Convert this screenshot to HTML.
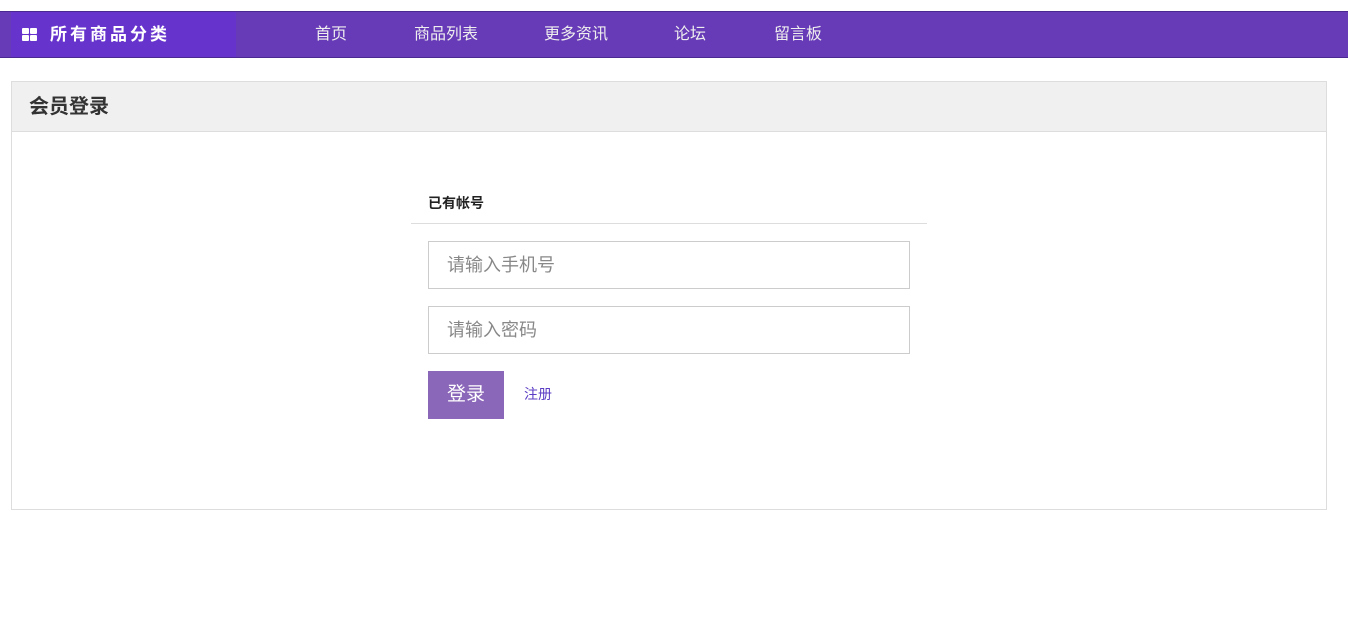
<!DOCTYPE html>
<html><head><meta charset="utf-8"><style>
*{margin:0;padding:0;box-sizing:border-box}
body{width:1348px;height:632px;background:#fff;font-family:"Liberation Sans","Noto Sans CJK SC",sans-serif;position:relative;overflow:hidden}
.nav{position:absolute;left:0;top:11px;width:1348px;height:47px;background:#673ab7;border-top:1px solid #4a2a90;border-bottom:1px solid #4a2a90}
.cat{position:absolute;left:11px;top:0;width:225px;height:45px;background:#6633cc;color:#fff;font-size:17px;font-weight:bold;letter-spacing:3px;line-height:45px;padding-left:39px}
.ico{position:absolute;left:11px;top:16px;width:15px;height:13px}
.ico i{position:absolute;width:7px;height:6px;background:#fff;border-radius:1px}
.nav a{position:absolute;top:0;line-height:45px;color:#eee;font-size:16px;text-decoration:none}
.panel{position:absolute;left:11px;top:81px;width:1316px;height:429px;border:1px solid #ddd}
.ph{height:50px;background:#f0f0f0;border-bottom:1px solid #ddd;font-size:20px;font-weight:bold;color:#333;line-height:50px;padding-left:17px}
.abs{position:absolute}
.inp{position:absolute;left:428px;width:482px;height:48px;border:1px solid #ccc;font-size:18px;color:#888;line-height:46px;padding-left:18px}
</style></head><body>
<div class="nav">
<div class="cat"><div class="ico"><i style="left:0;top:0"></i><i style="left:8px;top:0"></i><i style="left:0;top:7px"></i><i style="left:8px;top:7px"></i></div>所有商品分类</div>
<a style="left:315px">首页</a><a style="left:414px">商品列表</a><a style="left:544px">更多资讯</a><a style="left:674px">论坛</a><a style="left:774px">留言板</a>
</div>
<div class="panel"><div class="ph">会员登录</div></div>
<div class="abs" style="left:428px;top:193px;font-size:14px;font-weight:bold;color:#222">已有帐号</div>
<div class="abs" style="left:411px;top:223px;width:516px;height:1px;background:#ddd"></div>
<div class="inp" style="top:241px">请输入手机号</div>
<div class="inp" style="top:306px">请输入密码</div>
<div class="abs" style="left:428px;top:371px;width:76px;height:48px;background:#8b67b9;color:#fff;font-size:19px;line-height:48px;text-align:center">登录</div>
<div class="abs" style="left:524px;top:384px;font-size:14px;color:#5b3cc4">注册</div>
</body></html>
